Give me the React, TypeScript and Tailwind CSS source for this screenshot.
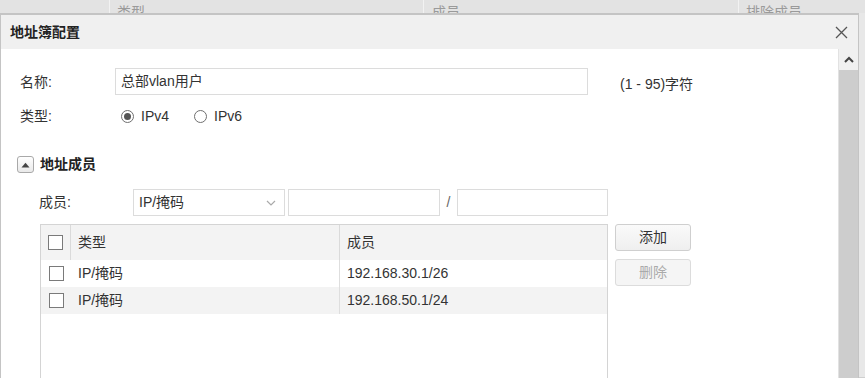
import React from "react";

const font = "font-['Liberation_Sans','Noto_Sans_CJK_SC',sans-serif]";

function Radio({ checked, label }: { checked?: boolean; label: string }) {
  return (
    <label className="flex items-center gap-[7px]">
      <span className="flex h-[13px] w-[13px] items-center justify-center rounded-full border border-[#6f6f6f] bg-white">
        {checked && <span className="h-[7px] w-[7px] rounded-full bg-[#555]" />}
      </span>
      <span>{label}</span>
    </label>
  );
}

function Check() {
  return <span className="block h-[15px] w-[15px] border border-[#7a7a7a] bg-white" />;
}

const rows = [
  { type: "IP/掩码", member: "192.168.30.1/26" },
  { type: "IP/掩码", member: "192.168.50.1/24" },
];

export default function App() {
  return (
    <div className={`relative h-[378px] w-[865px] overflow-hidden bg-[#e6e6e6] text-[14px] text-[#333] ${font}`}>
      {/* table header behind the dialog */}
      <div className="flex h-[13px] overflow-hidden bg-[#e3e3e3] text-[#9a9a9a] leading-[20px]">
        <div className="w-[110px] border-r border-[#f2f2f2]" />
        <div className="w-[314px] border-r border-[#f2f2f2] pl-[7px] pt-[2px]">类型</div>
        <div className="w-[315px] border-r border-[#f2f2f2] pl-[8px] pt-[2px]">成员</div>
        <div className="flex-1 pl-[7px] pt-[2px]">排除成员</div>
      </div>

      <div className="flex">
        {/* dialog */}
        <div className="flex h-[365px] w-[859px] flex-col overflow-hidden border-l border-r border-t-2 border-[#c4c4c4] bg-white">
          <div className="flex h-[34px] shrink-0 items-center justify-between bg-[#f0f0f0] pl-[9px] pr-[10px]">
            <span className="text-[14px] font-semibold text-[#222]">地址簿配置</span>
            <svg width="13" height="13" viewBox="0 0 13 13" className="mt-[1px]">
              <path d="M1 1 L12 12 M12 1 L1 12" stroke="#555" strokeWidth="1.3" fill="none" />
            </svg>
          </div>

          <div className="flex min-h-0 flex-1">
            <div className="flex-1 overflow-hidden pt-[19px]">
              {/* name */}
              <div className="flex h-[27px] items-center pl-[19px]">
                <span className="mt-[2px] w-[95px]">名称:</span>
                <div className="flex h-[27px] w-[473px] items-center border border-[#dcdcdc] pl-[5px]">总部vlan用户</div>
                <span className="ml-[32px] mt-[6px]">(1 - 95)字符</span>
              </div>

              {/* type */}
              <div className="mt-[9px] flex h-[24px] items-center pl-[19px]">
                <span className="w-[101px]">类型:</span>
                <div className="flex gap-[25px]">
                  <Radio checked label="IPv4" />
                  <Radio label="IPv6" />
                </div>
              </div>

              {/* section */}
              <div className="mt-[28px] flex h-[17px] items-center gap-[6px] pl-[16px]">
                <span className="flex h-[17px] w-[17px] items-center justify-center rounded-[3px] border border-[#a9a9a9] bg-gradient-to-b from-white to-[#e9e9e9]">
                  <svg width="9" height="6" viewBox="0 0 9 6">
                    <path d="M0.5 5.5 L4.5 0.8 L8.5 5.5 Z" fill="#444" />
                  </svg>
                </span>
                <span className="font-bold text-[#222]">地址成员</span>
              </div>

              {/* member input */}
              <div className="mt-[16px] flex h-[27px] items-center pl-[38px]">
                <span className="w-[94px]">成员:</span>
                <div className="flex h-[27px] w-[152px] items-center justify-between border border-[#dcdcdc] pl-[5px] pr-[8px]">
                  <span>IP/掩码</span>
                  <svg width="10" height="6" viewBox="0 0 10 6">
                    <path d="M1 1 L5 5 L9 1" stroke="#aaa" strokeWidth="1.2" fill="none" />
                  </svg>
                </div>
                <div className="ml-[3px] h-[27px] w-[152px] border border-[#dcdcdc]" />
                <span className="w-[17px] text-center text-[#666]">/</span>
                <div className="h-[27px] w-[151px] border border-[#dcdcdc]" />
              </div>

              {/* table + buttons */}
              <div className="mt-[8px] flex gap-[7px] pl-[39px]">
                <div className="h-[160px] w-[568px] shrink-0 border border-[#d4d4d4]">
                  <div className="flex h-[35px] items-center bg-[#f3f3f3]">
                    <div className="flex h-full w-[30px] items-center justify-center border-r border-[#dadada]">
                      <Check />
                    </div>
                    <div className="flex h-full w-[269px] items-center border-r border-[#dadada] pl-[7px]">类型</div>
                    <div className="flex-1 pl-[7px]">成员</div>
                  </div>
                  {rows.map((r, i) => (
                    <div key={i} className={`flex h-[27px] items-center ${i % 2 ? "bg-[#f3f3f3]" : "bg-white"}`}>
                      <div className="flex w-[30px] justify-center">
                        <Check />
                      </div>
                      <div className="w-[269px] border-r border-[#dedede] pl-[7px] leading-[27px]">{r.type}</div>
                      <div className="flex-1 pl-[7px]">{r.member}</div>
                    </div>
                  ))}
                </div>
                <div className="flex flex-col gap-[8px]">
                  <button className="h-[27px] w-[76px] rounded-[3px] border border-[#cfcfcf] bg-gradient-to-b from-[#fafafa] to-[#efefef] text-[#333]">
                    添加
                  </button>
                  <button className="h-[27px] w-[76px] rounded-[3px] border border-[#dcdcdc] bg-[#f5f5f5] text-[#aaa]">
                    删除
                  </button>
                </div>
              </div>
            </div>

            {/* scrollbar */}
            <div className="flex w-[20px] shrink-0 flex-col border-l border-[#e2e2e2]">
              <div className="flex h-[21px] items-center justify-center bg-[#f0f0f0]">
                <svg width="10" height="7" viewBox="0 0 10 7">
                  <path d="M1 6 L5 2 L9 6" stroke="#444" strokeWidth="2" fill="none" />
                </svg>
              </div>
              <div className="flex-1 bg-[#cdcdcd]" />
            </div>
          </div>
        </div>
        <div className="flex-1 border-b border-[#cfcfcf] bg-[#e8e8e8]" />
      </div>
    </div>
  );
}
